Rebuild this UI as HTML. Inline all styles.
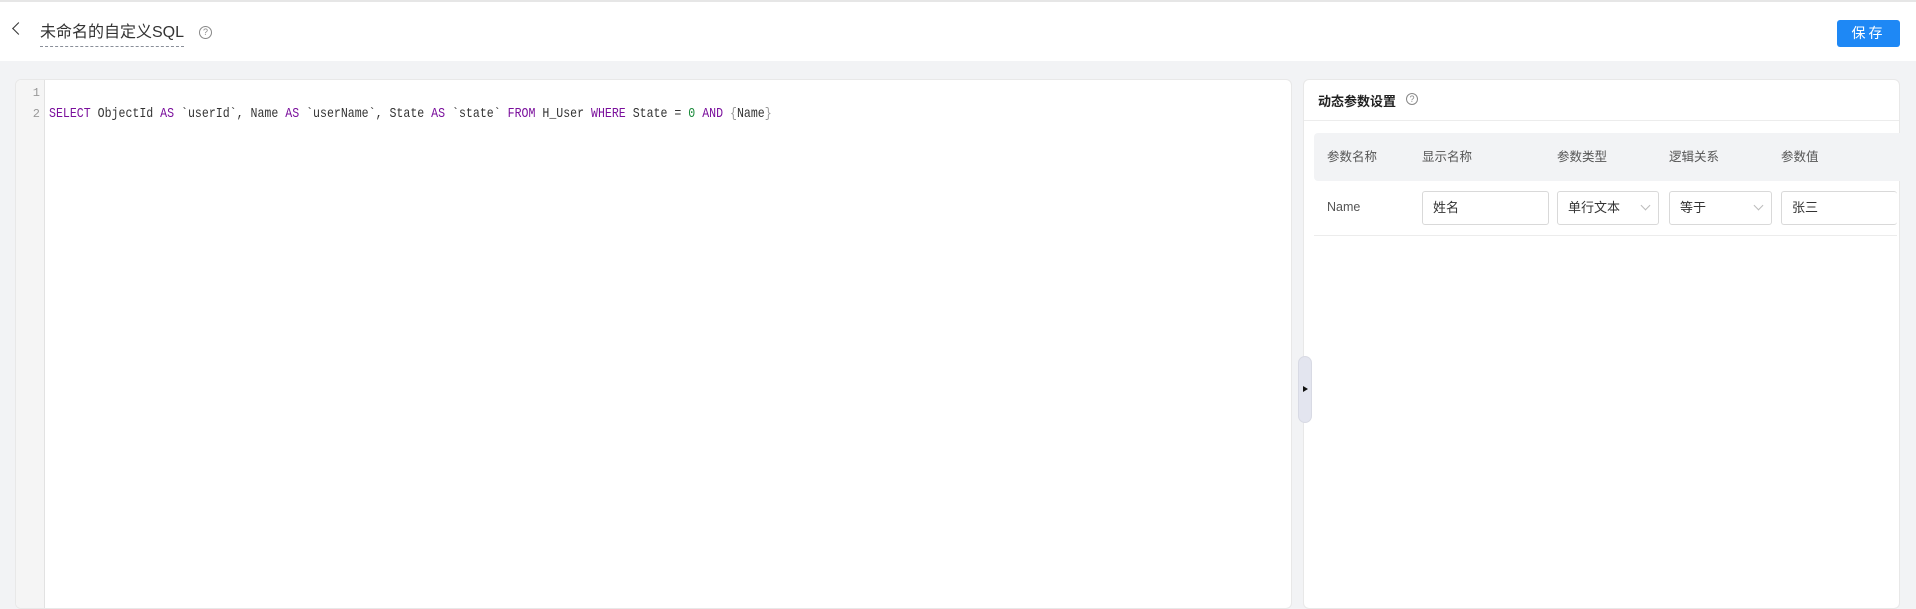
<!DOCTYPE html>
<html><head><meta charset="utf-8"><style>
*{box-sizing:border-box;margin:0;padding:0}
body{width:1916px;height:599px;overflow:hidden;background:#f2f3f5;font-family:"Liberation Sans","Noto Sans CJK SC",sans-serif;color:#333;position:relative}
.hdr{position:absolute;left:0;top:0;width:1916px;height:61px;background:#fff;border-top:2px solid #e6e6e6}
.back{position:absolute;left:14px;top:22px;width:9px;height:9px;border-left:1.5px solid #333;border-bottom:1.5px solid #333;transform:rotate(45deg)}
.title{position:absolute;left:40px;top:20px;font-size:16px;color:#333;line-height:22px;padding-bottom:2px;border-bottom:1px dashed #8a8f99}
.help{position:absolute;width:13px;height:13px;border:1px solid #888;border-radius:50%;font-size:9px;line-height:11px;text-align:center;color:#888}
.save{position:absolute;left:1837px;top:18px;width:63px;height:27px;background:#1e88f5;border-radius:3px;color:#fff;font-size:14px;line-height:27px;text-align:center;letter-spacing:3px}
.ed{position:absolute;left:15px;top:79px;width:1277px;height:530px;background:#fff;border-radius:6px;border:1px solid #e8e8e8;overflow:hidden}
.gut{position:absolute;left:0;top:0;width:29px;height:100%;background:#f5f5f5;border-right:1px solid #e2e2e2}
.ln{position:absolute;left:0;width:24px;text-align:right;font-family:"Liberation Mono",monospace;font-size:12px;color:#999}
.code{position:absolute;left:33px;top:26px;font-family:"Liberation Mono",monospace;font-size:14px;color:#333;white-space:pre;transform:scaleX(0.827);transform-origin:left}
.k{color:#7a0f9c}.n{color:#1a8a3a}.b{color:#999}
.handle{position:absolute;left:1298px;top:356px;width:14px;height:67px;background:#e3e5ef;border-radius:7px;border:1px solid #d8dae4}
.handle:after{content:"";position:absolute;left:4px;top:29px;border-left:5px solid #111;border-top:3px solid transparent;border-bottom:3px solid transparent}
.rp{position:absolute;left:1303px;top:79px;width:597px;height:530px;background:#fff;border-radius:6px;border:1px solid #e8e8e8}
.rt{position:absolute;left:14px;top:11px;font-size:13px;font-weight:bold;color:#222}
.rl{position:absolute;left:0;top:40px;width:100%;border-top:1px solid #ececec}
.th{position:absolute;left:10px;top:53px;width:587px;height:48px;background:#f2f3f5;border-radius:4px 0 0 4px}
.t{position:absolute;font-size:12.5px;color:#555}
.inp{position:absolute;top:111px;height:34px;border:1px solid #d9d9d9;border-radius:3px;font-size:13px;line-height:32px;padding-left:10px;color:#333;background:#fff}
.arr{position:absolute;right:9px;top:10px;width:7px;height:7px;border-right:1px solid #bbb;border-bottom:1px solid #bbb;transform:rotate(45deg)}
.rb{position:absolute;left:10px;top:155px;width:583px;border-top:1px solid #ececec}
</style></head><body>
<div class="hdr">
<div class="back"></div>
<div class="title">未命名的自定义SQL</div>
<div class="help" style="left:199px;top:24px">?</div>
<div class="save">保存</div>
</div>
<div class="ed">
<div class="gut"></div>
<div class="ln" style="top:6px">1</div>
<div class="ln" style="top:27px">2</div>
<div class="code"><span class="k">SELECT</span> ObjectId <span class="k">AS</span> `userId`, Name <span class="k">AS</span> `userName`, State <span class="k">AS</span> `state` <span class="k">FROM</span> H_User <span class="k">WHERE</span> State = <span class="n">0</span> <span class="k">AND</span> <span class="b">{</span>Name<span class="b">}</span></div>
</div>
<div class="rp">
<div class="rt">动态参数设置</div>
<div class="help" style="left:102px;top:13px;width:12px;height:12px;line-height:10px">?</div>
<div class="rl"></div>
<div class="th"></div>
<div class="t" style="left:23px;top:66px">参数名称</div>
<div class="t" style="left:118px;top:66px">显示名称</div>
<div class="t" style="left:253px;top:66px">参数类型</div>
<div class="t" style="left:365px;top:66px">逻辑关系</div>
<div class="t" style="left:477px;top:66px">参数值</div>
<div class="t" style="left:23px;top:120px">Name</div>
<div class="inp" style="left:118px;width:127px">姓名</div>
<div class="inp" style="left:253px;width:102px">单行文本<span class="arr"></span></div>
<div class="inp" style="left:365px;width:103px">等于<span class="arr"></span></div>
<div class="inp" style="left:477px;width:116px;border-right:none">张三</div>
<div class="rb"></div>
</div>
<div class="handle"></div>
</body></html>
